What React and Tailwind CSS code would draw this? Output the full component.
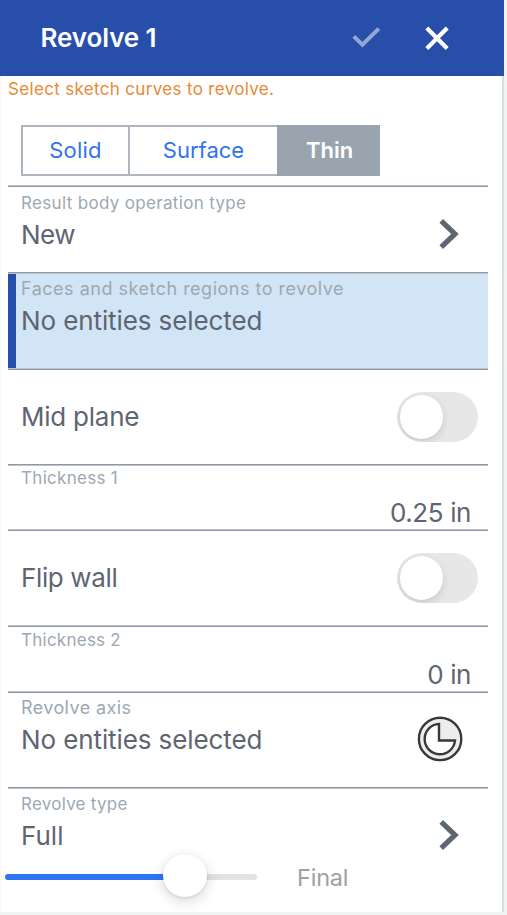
function Line({ flip = false }) {
  return (
    <div className="shrink-0">
      <div className={`h-px ${flip ? 'bg-[#9098a4]' : 'bg-[#bcc3ca]'}`} />
      <div className={`h-px ${flip ? 'bg-[#bcc3ca]' : 'bg-[#8d99a6]'}`} />
    </div>
  )
}

function Row({ height, flip, className = '', children }) {
  return (
    <div className={`flex flex-col ${height}`}>
      <Line flip={flip} />
      <div className={`flex grow pl-[13px] ${className}`}>{children}</div>
    </div>
  )
}

function Label({ className, children }) {
  return <div className={`whitespace-nowrap leading-5 text-[#9da8b2] ${className}`}>{children}</div>
}

function Value({ className = '', children }) {
  return <div className={`whitespace-nowrap text-[26px] leading-8 text-[#5e6572] ${className}`}>{children}</div>
}

function Chevron({ className }) {
  return (
    <svg width="20" height="32" viewBox="0 0 20 32" className={`shrink-0 ${className}`} fill="none">
      <path d="M2.2 2.8 16 16 2.2 29.2" stroke="#5e6672" strokeWidth="5.2" />
    </svg>
  )
}

function Toggle() {
  return (
    <div className="mr-[10px] h-[49.5px] w-[81.5px] overflow-hidden rounded-full bg-[#e7e7e8] pl-[3.3px] pt-[2.8px]">
      <div className="size-[43.5px] rounded-full bg-white shadow-[0_3px_9px_rgba(0,0,0,0.12),0_1px_2px_rgba(0,0,0,0.04)]" />
    </div>
  )
}

function AxisIcon() {
  return (
    <svg width="46" height="46" viewBox="0 0 46 46" className="shrink-0" stroke="#383838" strokeWidth="2.4">
      <circle cx="23.1" cy="22.9" r="21.2" fill="#ededed" />
      <path d="M22 7.9A15.2 15.2 0 1 0 38 24.5H22Z" fill="#ffffff" />
    </svg>
  )
}

export default function App() {
  return (
    <div className="flex h-[915px] w-[507px] flex-col overflow-hidden bg-[#f2f3f3] font-['Inter','Liberation_Sans',sans-serif]">
      <div className="flex h-[76px] w-[504px] shrink-0 items-center bg-[#274fa9] pl-[40.5px]">
        <h1 className="grow whitespace-nowrap text-[26px] font-semibold leading-8 tracking-[-0.1px] text-white">Revolve 1</h1>
        <svg width="30" height="24" viewBox="0 0 30 24" className="mr-[44px]" fill="none">
          <path d="M2.8 10.4 11.4 18.6 27.8 2.6" stroke="#93a7d4" strokeWidth="4" />
        </svg>
        <svg width="24" height="24" viewBox="0 0 24 24" className="mr-[55px]" fill="none">
          <path d="M1.8 2 22.2 22.4M22.2 2 1.8 22.4" stroke="#ffffff" strokeWidth="4.2" />
        </svg>
      </div>
      <main className="flex h-[836px] w-[504px] shrink-0 flex-col border-l border-r-2 border-l-[#f7f7f8] border-r-[#d8dfe4] bg-white">
        <p className="ml-[7px] mt-[3px] whitespace-nowrap text-[17px] leading-5 tracking-[0.33px] text-[#e88a35]">
          Select sketch curves to revolve.
        </p>
        <div className="ml-5 mt-[26px] flex h-[51px] w-[359px] shrink-0 border-2 border-[#adb6be] text-[22px] leading-8">
          <div className="flex w-[105px] items-center justify-center pb-px tracking-[0.25px] text-[#2f74ee]">Solid</div>
          <div className="flex w-[151px] items-center justify-center border-l-2 border-[#adb6be] pb-px pr-[2px] text-[#2f74ee]">Surface</div>
          <div className="flex grow items-center justify-center bg-[#9aa4ae] pb-px pl-[2px] font-semibold text-white outline-2 outline-[#9aa4ae]">Thin</div>
        </div>
        <div className="ml-[7px] mt-[9px] flex w-[480px] flex-col">
          <Row height="h-[87px]">
            <div className="grow pt-[6px]">
              <Label className="text-[17px] tracking-[0.33px]">Result body operation type</Label>
              <Value className="mt-[6px] tracking-[-0.5px]">New</Value>
            </div>
            <Chevron className="mr-[29px] mt-[30.5px]" />
          </Row>
          <div className="flex h-[96px] flex-col">
            <Line flip />
            <div className="grow border-l-8 border-[#274fa9] bg-[#d1e5f6] pl-[5px] pt-[5px]">
              <Label className="text-[18px] tracking-[0.5px]">Faces and sketch regions to revolve</Label>
              <Value className="mt-[6px] tracking-[-0.1px]">No entities selected</Value>
            </div>
          </div>
          <Row height="h-[96px]" className="items-center justify-between">
            <Value className="tracking-[-0.24px]">Mid plane</Value>
            <Toggle />
          </Row>
          <Row height="h-[65px]" flip className="flex-col pt-[2px]">
            <Label className="text-[17px] tracking-[0.3px]">Thickness 1</Label>
            <Value className="mr-[17px] mt-[9px] self-end tracking-[-0.4px]">0.25 in</Value>
          </Row>
          <Row height="h-[96px]" className="items-center justify-between">
            <Value className="tracking-[-0.36px]">Flip wall</Value>
            <Toggle />
          </Row>
          <Row height="h-[66px]" className="flex-col pt-[3px]">
            <Label className="text-[17px] tracking-[0.25px]">Thickness 2</Label>
            <Value className="mr-[17px] mt-[9px] self-end tracking-[-0.4px]">0 in</Value>
          </Row>
          <Row height="h-[96px]">
            <div className="grow pt-[5px]">
              <Label className="text-[18px] tracking-[0.4px]">Revolve axis</Label>
              <Value className="mt-[6px] tracking-[-0.1px]">No entities selected</Value>
            </div>
            <div className="mr-[24.7px] mt-[23px]">
              <AxisIcon />
            </div>
          </Row>
          <Row height="h-[66px]" flip>
            <div className="grow pt-[5px]">
              <Label className="text-[17px] tracking-[0.25px]">Revolve type</Label>
              <Value className="mt-[6px]">Full</Value>
            </div>
            <Chevron className="mr-[29px] mt-[30px]" />
          </Row>
        </div>
        <div className="ml-1 mt-[2px] flex h-[44px] items-center">
          <div className="flex h-[6.5px] w-[252px] items-center rounded-full bg-[#e2e2e4]">
            <div className="h-full w-[170px] rounded-l-full bg-[#2f75f2]" />
            <div className="-ml-[12px] -mt-[3px] size-[43.5px] shrink-0 rounded-full bg-white shadow-[0_4px_14px_rgba(0,0,0,0.16),0_1px_3px_rgba(0,0,0,0.1)]" />
          </div>
          <div className="ml-[40px] mt-[2px] whitespace-nowrap text-[23.5px] leading-8 tracking-[-0.2px] text-[#a0a0a0]">Final</div>
        </div>
      </main>
    </div>
  )
}
